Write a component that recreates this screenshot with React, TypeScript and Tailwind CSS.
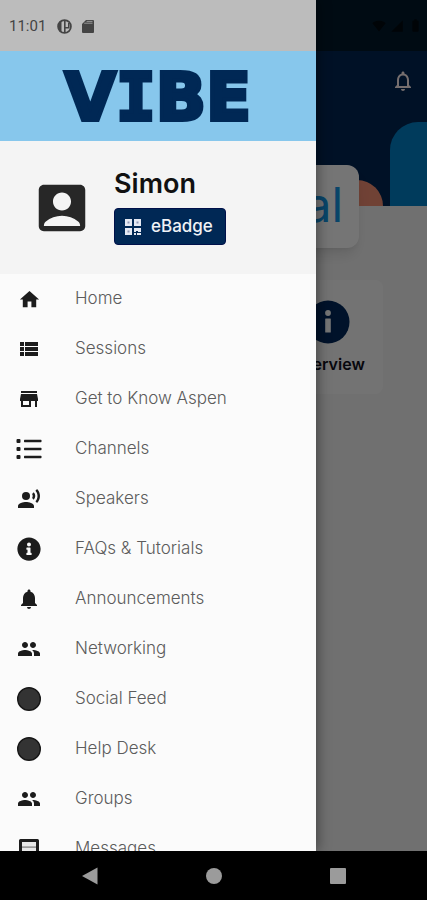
import React from 'react';
import {
  MdAccountBox,
  MdBatteryFull,
  MdHome,
  MdNotifications,
  MdNotificationsNone,
  MdPeople,
  MdRecordVoiceOver,
  MdSignalCellular4Bar,
  MdSignalWifi4Bar,
  MdStore,
  MdViewList,
} from 'react-icons/md';
import { FaInfoCircle } from 'react-icons/fa';

type MenuItem = {
  label: string;
  icon: React.ReactNode;
};

function ListIcon() {
  return (
    <svg className="w-[26px] h-[26px]" viewBox="0 0 26 26" fill="currentColor">
      {[3, 11, 19].map((y) => (
        <React.Fragment key={y}>
          <rect x="0.500" y={y} width="4" height="4" rx="1" />
          <rect x="8" y={y + 0.8} width="17.500" height="2.4" rx="0.6" />
        </React.Fragment>
      ))}
    </svg>
  );
}

function MessageIcon() {
  return (
    <svg className="w-6 h-6" viewBox="0 0 24 24">
      <path d="M3.5 2h17A1.5 1.5 0 0 1 22 3.500V22l-4-4H3.500A1.500 1.500 0 0 1 2 16.500v-13A1.500 1.500 0 0 1 3.500 2z" fill="currentColor" />
      <path d="M5 5h14v10H5z" fill="#e8e8e8" />
      <path d="M5 9.500h14v1.200H5z" fill="#777" />
    </svg>
  );
}

function DotIcon() {
  return (
    <svg className="w-[26px] h-[26px]" viewBox="0 0 26 26">
      <circle cx="13" cy="13" r="11.300" fill="#333" stroke="#161616" strokeWidth="1.400" />
    </svg>
  );
}

function BadgeIcon() {
  return (
    <svg className="w-4 h-4" viewBox="0 0 16 16" fill="#e4e8f2">
      <path d="M0 0h7v7H0zM9 0h7v7H9zM0 9h7v7H0zM9 9h7v4h-3v-1h-2v1H9zM9 14h2v2H9zM12 14h4v2h-4z" />
      <path d="M2.500 2.500h2v2h-2zM11.500 2.500h2v2h-2zM2.500 11.500h2v2h-2z" fill="#8d98b5" />
    </svg>
  );
}

const menuItems: MenuItem[] = [
  { label: 'Home', icon: <MdHome className="w-[23px] h-[23px]" /> },
  { label: 'Sessions', icon: <MdViewList className="w-6 h-6" /> },
  { label: 'Get to Know Aspen', icon: <MdStore className="w-6 h-6" /> },
  { label: 'Channels', icon: <ListIcon /> },
  { label: 'Speakers', icon: <MdRecordVoiceOver className="w-6 h-6" /> },
  { label: 'FAQs & Tutorials', icon: <FaInfoCircle className="w-6 h-6" /> },
  { label: 'Announcements', icon: <MdNotifications className="w-6 h-6" /> },
  { label: 'Networking', icon: <MdPeople className="w-6 h-6" /> },
  { label: 'Social Feed', icon: <DotIcon /> },
  { label: 'Help Desk', icon: <DotIcon /> },
  { label: 'Groups', icon: <MdPeople className="w-6 h-6" /> },
  { label: 'Messages', icon: <MessageIcon /> },
];

function HomeScreen() {
  return (
    <div className="h-full bg-[#f5f5f5]">
      <header className="relative h-[206px] overflow-hidden bg-[#002553]">
        <div className="flex h-[51px] items-center justify-end gap-1 bg-[#001a2b] pr-1 text-[#000a10]">
          <MdSignalWifi4Bar className="w-[14px] h-[14px]" />
          <MdSignalCellular4Bar className="w-[14px] h-[14px]" />
          <MdBatteryFull className="w-[15px] h-[15px]" />
        </div>
        <div className="flex h-[60px] items-center justify-end pr-3">
          <button type="button" aria-label="Notifications" className="text-[#fff0f0]">
            <MdNotificationsNone className="w-6 h-6" />
          </button>
        </div>
        {/* Banner artwork */}
        <div className="absolute right-[44px] bottom-[-26px] w-[52px] h-[52px] rounded-full bg-[#f49075]" />
        <div className="absolute right-0 bottom-0 w-[37px] h-[84px] rounded-tl-[28px] bg-[#0080c8]" />
      </header>

      {/* Event logo overlaps the banner */}
      <div className="relative mx-[68px] -mt-[41px] flex h-[83px] items-center justify-end rounded-xl bg-white pr-4 pb-1 shadow-lg">
        <span className="text-5xl leading-none text-[#1597e5]">al</span>
      </div>

      <main className="mt-8 flex justify-end px-11">
        <a href="#overview" className="flex h-[114px] w-[110px] flex-col items-center rounded-lg bg-[#fbfbfb] pt-5">
          <svg className="w-[44px] h-[44px]" viewBox="0 0 44 44">
            <circle cx="22" cy="22" r="21.500" fill="#00295c" />
            <circle cx="22" cy="13" r="2.900" fill="#fff" />
            <rect x="19.200" y="18.500" width="5.600" height="14" rx="0.500" fill="#fff" />
          </svg>
          <span className="mt-2 text-base font-semibold text-[#101020]">Overview</span>
        </a>
      </main>
    </div>
  );
}

function Drawer() {
  return (
    <aside className="absolute inset-y-0 left-0 w-[74%] overflow-hidden bg-[#fbfbfb] shadow-[2px_0_12px_rgba(0,0,0,0.4)]">
      <div className="flex h-[51px] items-center bg-[#bcbcbc] pl-[9px] pt-[2px] text-[#444]">
        <span className="font-['Roboto',sans-serif] text-[15px]">11:01</span>
        <svg className="ml-[11px] w-[15px] h-[15px]" viewBox="0 0 15 15">
          <circle cx="7.500" cy="7.500" r="6.400" fill="none" stroke="currentColor" strokeWidth="1.800" />
          <path d="M2 3.500L4.500 2v11L2 11z" fill="currentColor" />
          <path d="M7 2h1.600v11H7zM8 8h4.500v1.500H8zM11 4h1.500v5H11z" fill="currentColor" />
        </svg>
        <svg className="ml-[10px] w-3 h-[13px]" viewBox="0 0 12 13" fill="currentColor">
          <path d="M4 0h7a1 1 0 0 1 1 1v11a1 1 0 0 1-1 1H1a1 1 0 0 1-1-1V4z" />
          <path d="M2.200 3.200h8.300M4.600 1.400h5.900" stroke="#a0a0a0" strokeWidth="0.900" />
        </svg>
      </div>

      <div className="flex h-[90px] items-center justify-center bg-[#87c7ec] pt-1">
        {/* The wide slab I comes from the mono face */}
        <h1 className="font-['DejaVu_Sans',sans-serif] text-[66px] leading-none font-bold text-[#002855] [-webkit-text-stroke:4px_#002855]">
          V<span className="font-['DejaVu_Sans_Mono',monospace]">I</span>BE
        </h1>
      </div>

      <section className="flex h-[133px] items-center bg-[#f4f4f4] pl-[31px]">
        <MdAccountBox className="w-[62px] h-[62px] text-[#272727]" />
        <div className="ml-[21px] flex flex-col items-start gap-2 pb-[2px]">
          <h2 className="text-[27px] leading-8 font-semibold text-[#111]">Simon</h2>
          <button
            type="button"
            className="flex h-[37px] items-center gap-[10px] rounded-[4px] border border-[#00104a] bg-[#002855] px-[10px] text-[17px] font-medium text-[#f0f2f6]"
          >
            <BadgeIcon />
            <span className="pr-[2px]">eBadge</span>
          </button>
        </div>
      </section>

      <nav>
        <ul>
          {menuItems.map((item) => (
            <li key={item.label}>
              <a href="#" className="flex h-[50px] items-center pl-[15px] text-[17px] font-light text-[#5c5c5c]">
                <span className="flex w-7 justify-center text-[#1c1c1c]">{item.icon}</span>
                <span className="ml-8">{item.label}</span>
              </a>
            </li>
          ))}
        </ul>
      </nav>
    </aside>
  );
}

function SystemNav() {
  return (
    <div className="flex h-[49px] shrink-0 items-center justify-around bg-black px-[27px] text-[#9b9b9b]">
      <button type="button" aria-label="Back">
        <svg className="w-[18px] h-[18px]" viewBox="0 0 18 18" fill="currentColor">
          <path d="M16.500 0.500v17L1 9z" />
        </svg>
      </button>
      <button type="button" aria-label="Home screen" className="w-4 h-4 rounded-full bg-[#9b9b9b]" />
      <button type="button" aria-label="Recent apps" className="w-4 h-4 rounded-[1px] bg-[#9b9b9b]" />
    </div>
  );
}

export default function App() {
  return (
    <div className="flex h-screen flex-col overflow-hidden font-['Inter',sans-serif]">
      <div className="relative flex-1 overflow-hidden">
        <HomeScreen />
        <div className="absolute inset-0 bg-black/54" />
        <Drawer />
      </div>
      <SystemNav />
    </div>
  );
}
